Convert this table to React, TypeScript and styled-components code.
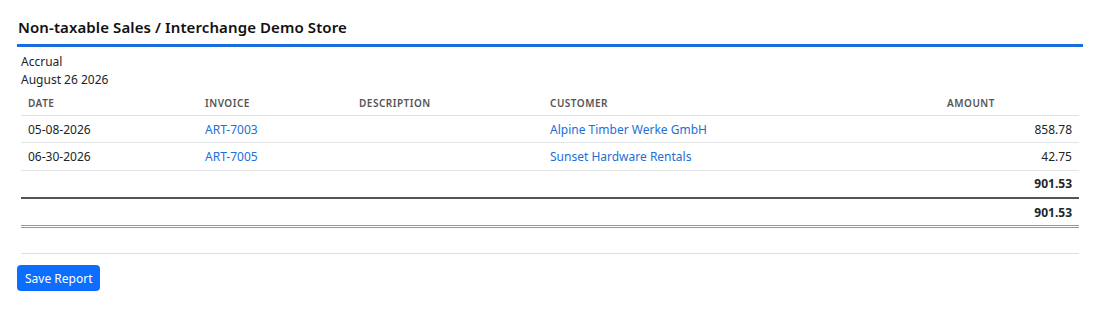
import React from "react";
import styled, { createGlobalStyle } from "styled-components";

const GlobalStyle = createGlobalStyle`
  body {
    margin: 0;
    background: #fff;
    font-family: "Noto Sans", "Open Sans", sans-serif;
    color: #212529;
  }
`;

const Page = styled.div`
  padding: 16px 17px 0;
`;

const Heading = styled.h2`
  margin: 0;
  padding: 0 1px 6px;
  font-size: 15px;
  line-height: 22px;
  font-weight: 600;
  letter-spacing: 0.1px;
  color: #111;
  border-bottom: 3px solid #1a6ddb;
`;

const Body = styled.div`
  padding: 6px 4px 0;
`;

const Meta = styled.div`
  font-size: 12px;
  line-height: 18px;
`;

const Table = styled.table`
  width: 100%;
  margin-top: 1px;
  border-collapse: collapse;
  font-size: 12px;
`;

const Th = styled.th`
  padding: 6px 7px 5px;
  font-size: 10px;
  line-height: 14px;
  font-weight: 600;
  letter-spacing: 0.5px;
  text-transform: uppercase;
  color: #555;
  text-align: left;
  border-bottom: 1px solid #dee2e6;
`;

const Row = styled.tr<{ $rule?: "single" | "double" }>`
  border-bottom: ${(p) =>
    p.$rule === "single"
      ? "2px solid #555"
      : p.$rule === "double"
      ? "3px double #999"
      : "1px solid #e3e5e8"};
`;

const Td = styled.td<{ $right?: boolean; $bold?: boolean }>`
  padding: 5.75px 7px 4.5px;
  line-height: 16px;
  text-align: ${(p) => (p.$right ? "right" : "left")};
  font-weight: ${(p) => (p.$bold ? 700 : 400)};
`;

const Link = styled.a`
  color: #1b6fd8;
  text-decoration: none;
`;

const Divider = styled.hr`
  margin: 25px 0 11px;
  border: 0;
  border-top: 1px solid #dcdfe3;
`;

const SaveButton = styled.button`
  margin-left: -4px;
  padding: 0 8px;
  height: 26px;
  font-family: inherit;
  font-size: 12px;
  color: #fff;
  background: #0d6efd;
  border: none;
  border-radius: 4px;
  cursor: pointer;
`;

const rows = [
  { date: "05-08-2026", invoice: "ART-7003", customer: "Alpine Timber Werke GmbH", amount: "858.78" },
  { date: "06-30-2026", invoice: "ART-7005", customer: "Sunset Hardware Rentals", amount: "42.75" },
];

const App: React.FC = () => {
  return (
    <Page>
      <GlobalStyle />
      <Heading>Non-taxable Sales / Interchange Demo Store</Heading>
      <Body>
        <Meta>Accrual</Meta>
        <Meta>August 26 2026</Meta>
        <Table>
          <colgroup>
            <col style={{ width: 177 }} />
            <col style={{ width: 154 }} />
            <col style={{ width: 191 }} />
            <col style={{ width: 397 }} />
            <col />
          </colgroup>
          <thead>
            <tr>
              <Th>Date</Th>
              <Th>Invoice</Th>
              <Th>Description</Th>
              <Th>Customer</Th>
              <Th>Amount</Th>
            </tr>
          </thead>
          <tbody>
            {rows.map((r) => (
              <Row key={r.invoice}>
                <Td>{r.date}</Td>
                <Td>
                  <Link href="#">{r.invoice}</Link>
                </Td>
                <Td />
                <Td>
                  <Link href="#">{r.customer}</Link>
                </Td>
                <Td $right>{r.amount}</Td>
              </Row>
            ))}
            <Row $rule="single">
              <Td colSpan={4} />
              <Td $right $bold>901.53</Td>
            </Row>
            <Row $rule="double">
              <Td colSpan={4} />
              <Td $right $bold>901.53</Td>
            </Row>
          </tbody>
        </Table>
        <Divider />
        <SaveButton type="button">Save Report</SaveButton>
      </Body>
    </Page>
  );
};

export default App;
